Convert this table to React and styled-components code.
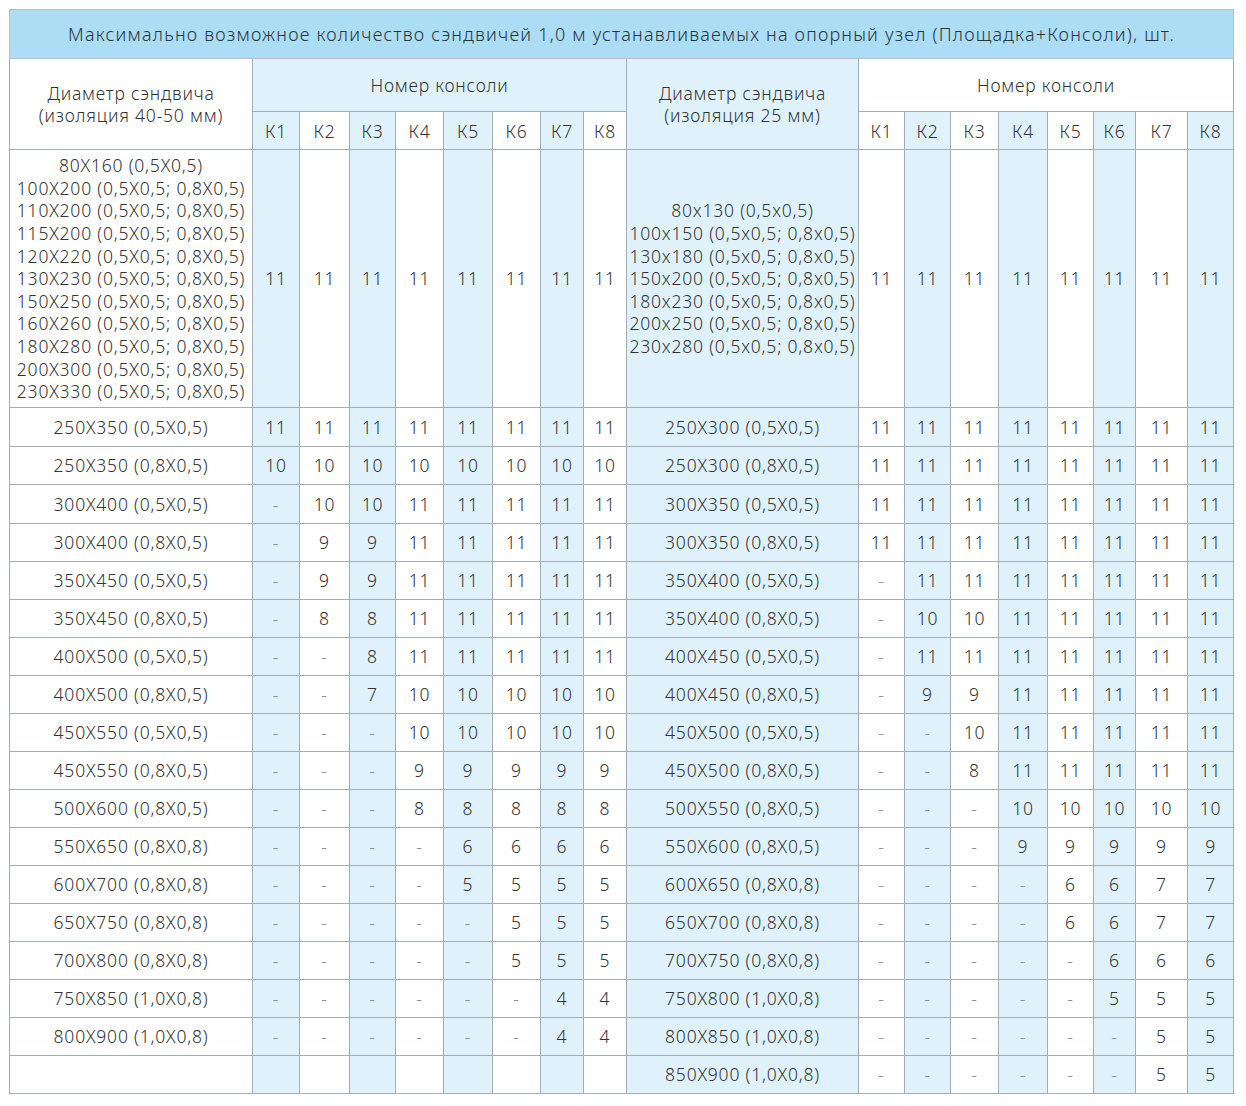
import React from "react";
import styled, { createGlobalStyle } from "styled-components";

const GlobalStyle = createGlobalStyle`
  body {
    margin: 0;
    background: #ffffff;
    font-family: "Noto Sans", "Open Sans", sans-serif;
    color: #333;
  }
`;

const Page = styled.div`
  padding: 9px 0 0 9px;
`;

const Table = styled.table`
  border-collapse: collapse;
  table-layout: fixed;
  width: 1224px;
  font-size: 17.5px;
  font-weight: 300;
  letter-spacing: 0.8px;
  color: #333;
  border: 1px solid #b7bfc5;
`;

const Title = styled.th`
  height: 48px;
  background: #abddf5;
  font-weight: 300;
  font-size: 18px;
  letter-spacing: 1.2px;
  color: #2a3439;
  border: 1px solid #b7bfc5;
  padding: 0;
  white-space: nowrap;
`;

const Head = styled.th`
  height: ${({ h }) => h || 38}px;
  background: ${({ shade }) => (shade ? "#dff2fb" : "#ffffff")};
  font-weight: 300;
  line-height: 22px;
  border: 1px solid #a3adb4;
  padding: 0;
  vertical-align: middle;
  white-space: nowrap;
`;

const Cell = styled.td`
  height: ${({ h }) => h || 37}px;
  background: ${({ shade }) => (shade ? "#dff2fb" : "#ffffff")};
  border: 1px solid #a3adb4;
  text-align: center;
  padding: 0;
  line-height: 22.6px;
  white-space: nowrap;
`;

const Dash = styled.span`
  color: #8a9196;
`;

const leftCols = [243, 47, 50, 46, 48, 49, 48, 43, 43];
const rightCols = [232, 46, 46, 48, 49, 46, 42, 52, 46];

const bigLeft = [
  "80X160 (0,5X0,5)",
  "100X200 (0,5X0,5; 0,8X0,5)",
  "110X200 (0,5X0,5; 0,8X0,5)",
  "115X200 (0,5X0,5; 0,8X0,5)",
  "120X220 (0,5X0,5; 0,8X0,5)",
  "130X230 (0,5X0,5; 0,8X0,5)",
  "150X250 (0,5X0,5; 0,8X0,5)",
  "160X260 (0,5X0,5; 0,8X0,5)",
  "180X280 (0,5X0,5; 0,8X0,5)",
  "200X300 (0,5X0,5; 0,8X0,5)",
  "230X330 (0,5X0,5; 0,8X0,5)",
];

const bigRight = [
  "80x130 (0,5x0,5)",
  "100x150 (0,5x0,5; 0,8x0,5)",
  "130x180 (0,5x0,5; 0,8x0,5)",
  "150x200 (0,5x0,5; 0,8x0,5)",
  "180x230 (0,5x0,5; 0,8x0,5)",
  "200x250 (0,5x0,5; 0,8x0,5)",
  "230x280 (0,5x0,5; 0,8x0,5)",
];

const d = "-";
const eleven = Array(8).fill("11");

const leftRows = [
  ["250X350 (0,5X0,5)", eleven],
  ["250X350 (0,8X0,5)", Array(8).fill("10")],
  ["300X400 (0,5X0,5)", [d, "10", "10", "11", "11", "11", "11", "11"]],
  ["300X400 (0,8X0,5)", [d, "9", "9", "11", "11", "11", "11", "11"]],
  ["350X450 (0,5X0,5)", [d, "9", "9", "11", "11", "11", "11", "11"]],
  ["350X450 (0,8X0,5)", [d, "8", "8", "11", "11", "11", "11", "11"]],
  ["400X500 (0,5X0,5)", [d, d, "8", "11", "11", "11", "11", "11"]],
  ["400X500 (0,8X0,5)", [d, d, "7", "10", "10", "10", "10", "10"]],
  ["450X550 (0,5X0,5)", [d, d, d, "10", "10", "10", "10", "10"]],
  ["450X550 (0,8X0,5)", [d, d, d, "9", "9", "9", "9", "9"]],
  ["500X600 (0,8X0,5)", [d, d, d, "8", "8", "8", "8", "8"]],
  ["550X650 (0,8X0,8)", [d, d, d, d, "6", "6", "6", "6"]],
  ["600X700 (0,8X0,8)", [d, d, d, d, "5", "5", "5", "5"]],
  ["650X750 (0,8X0,8)", [d, d, d, d, d, "5", "5", "5"]],
  ["700X800 (0,8X0,8)", [d, d, d, d, d, "5", "5", "5"]],
  ["750X850 (1,0X0,8)", [d, d, d, d, d, d, "4", "4"]],
  ["800X900 (1,0X0,8)", [d, d, d, d, d, d, "4", "4"]],
  ["", Array(8).fill("")],
];

const rightRows = [
  ["250X300 (0,5X0,5)", eleven],
  ["250X300 (0,8X0,5)", eleven],
  ["300X350 (0,5X0,5)", eleven],
  ["300X350 (0,8X0,5)", eleven],
  ["350X400 (0,5X0,5)", [d, "11", "11", "11", "11", "11", "11", "11"]],
  ["350X400 (0,8X0,5)", [d, "10", "10", "11", "11", "11", "11", "11"]],
  ["400X450 (0,5X0,5)", [d, "11", "11", "11", "11", "11", "11", "11"]],
  ["400X450 (0,8X0,5)", [d, "9", "9", "11", "11", "11", "11", "11"]],
  ["450X500 (0,5X0,5)", [d, d, "10", "11", "11", "11", "11", "11"]],
  ["450X500 (0,8X0,5)", [d, d, "8", "11", "11", "11", "11", "11"]],
  ["500X550 (0,8X0,5)", [d, d, d, "10", "10", "10", "10", "10"]],
  ["550X600 (0,8X0,5)", [d, d, d, "9", "9", "9", "9", "9"]],
  ["600X650 (0,8X0,8)", [d, d, d, d, "6", "6", "7", "7"]],
  ["650X700 (0,8X0,8)", [d, d, d, d, "6", "6", "7", "7"]],
  ["700X750 (0,8X0,8)", [d, d, d, d, d, "6", "6", "6"]],
  ["750X800 (1,0X0,8)", [d, d, d, d, d, "5", "5", "5"]],
  ["800X850 (1,0X0,8)", [d, d, d, d, d, d, "5", "5"]],
  ["850X900 (1,0X0,8)", [d, d, d, d, d, d, "5", "5"]],
];

const rowHeights = [38, 37, 38, 37, 37, 37, 37, 37, 37, 37, 37, 36, 37, 37, 37, 37, 37, 35];

const leftShade = (i) => i % 2 === 0;
const rightShade = (i) => i % 2 === 1;

const Value = ({ v }) => (v === d ? <Dash>-</Dash> : v);

const App = () => {
  const ks = ["К1", "К2", "К3", "К4", "К5", "К6", "К7", "К8"];
  return (
    <Page>
      <GlobalStyle />
      <Table>
        <colgroup>
          {leftCols.concat(rightCols).map((w, i) => (
            <col key={i} style={{ width: w }} />
          ))}
        </colgroup>
        <thead>
          <tr>
            <Title colSpan={18}>
              Максимально возможное количество сэндвичей 1,0 м устанавливаемых на опорный узел (Площадка+Консоли), шт.
            </Title>
          </tr>
          <tr>
            <Head rowSpan={2} h={52}>
              Диаметр сэндвича
              <br />
              (изоляция 40-50 мм)
            </Head>
            <Head colSpan={8} h={52} shade>
              Номер консоли
            </Head>
            <Head rowSpan={2} shade>
              Диаметр сэндвича
              <br />
              (изоляция 25 мм)
            </Head>
            <Head colSpan={8} h={52}>
              Номер консоли
            </Head>
          </tr>
          <tr>
            {ks.map((k, i) => (
              <Head key={"l" + k} h={37} shade={leftShade(i)}>
                {k}
              </Head>
            ))}
            {ks.map((k, i) => (
              <Head key={"r" + k} h={37} shade={rightShade(i)}>
                {k}
              </Head>
            ))}
          </tr>
        </thead>
        <tbody>
          <tr>
            <Cell h={257}>
              {bigLeft.map((t) => (
                <div key={t}>{t}</div>
              ))}
            </Cell>
            {eleven.map((v, i) => (
              <Cell key={"bl" + i} shade={leftShade(i)}>
                {v}
              </Cell>
            ))}
            <Cell shade>
              {bigRight.map((t) => (
                <div key={t}>{t}</div>
              ))}
            </Cell>
            {eleven.map((v, i) => (
              <Cell key={"br" + i} shade={rightShade(i)}>
                {v}
              </Cell>
            ))}
          </tr>
          {leftRows.map(([label, vals], r) => (
            <tr key={r}>
              <Cell h={rowHeights[r]}>{label}</Cell>
              {vals.map((v, i) => (
                <Cell key={"l" + i} shade={leftShade(i)}>
                  <Value v={v} />
                </Cell>
              ))}
              <Cell shade>{rightRows[r][0]}</Cell>
              {rightRows[r][1].map((v, i) => (
                <Cell key={"r" + i} shade={rightShade(i)}>
                  <Value v={v} />
                </Cell>
              ))}
            </tr>
          ))}
        </tbody>
      </Table>
    </Page>
  );
};

export default App;
